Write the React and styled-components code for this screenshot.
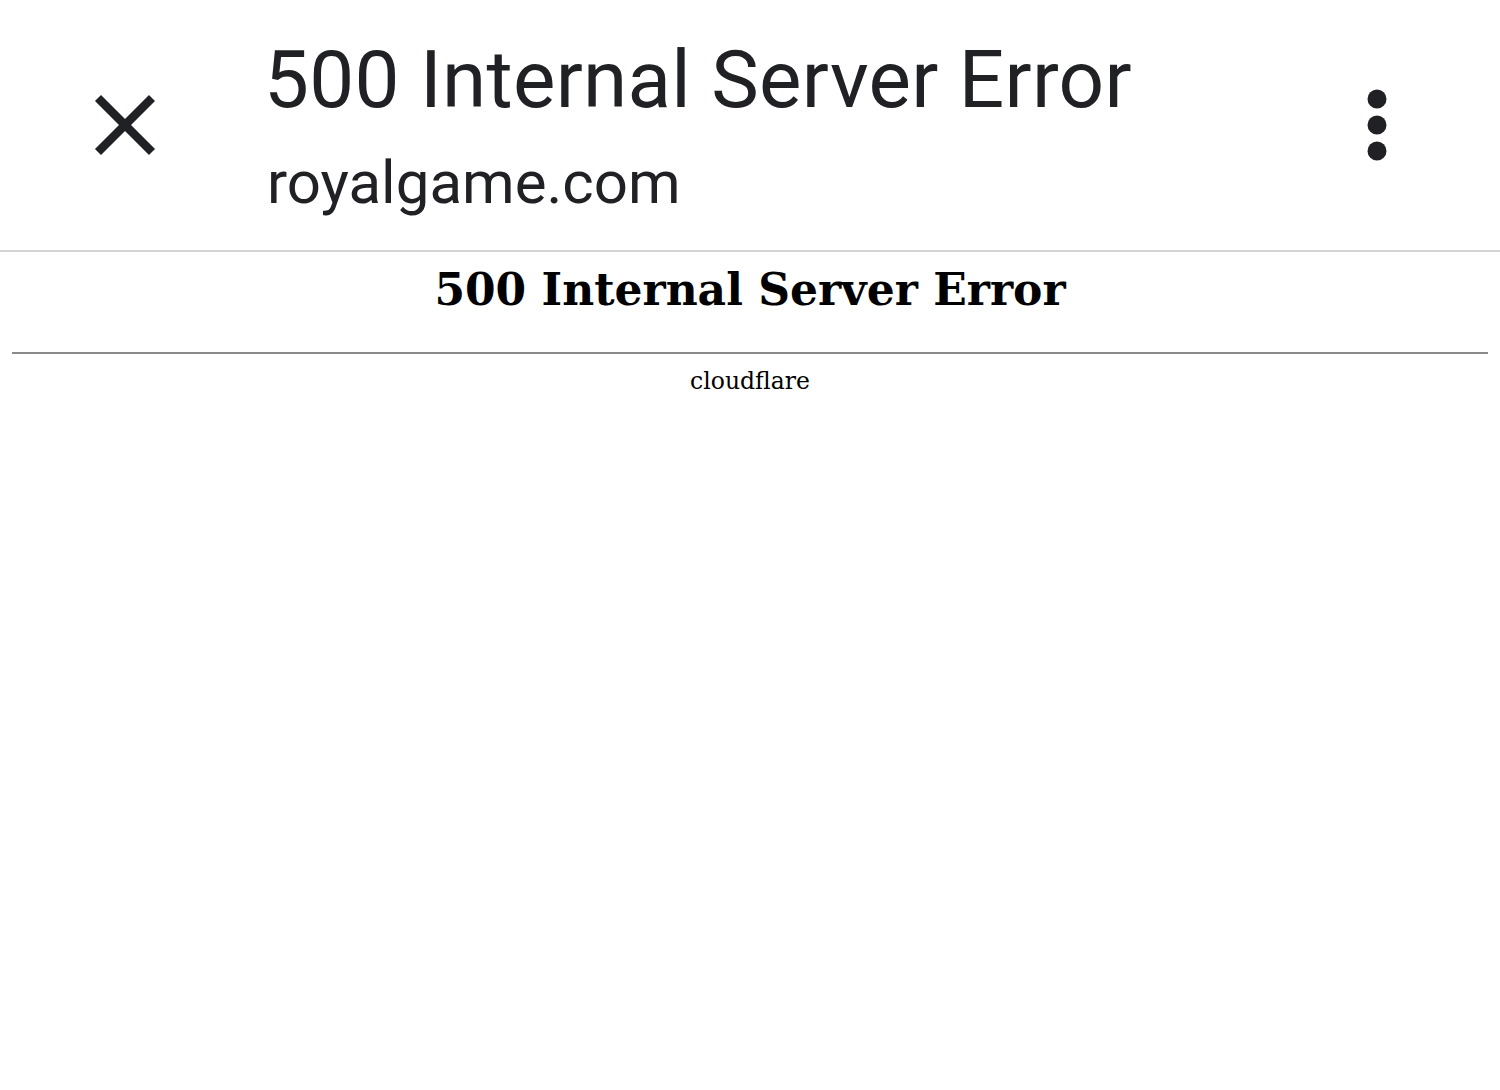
import React from 'react';
import styled, { createGlobalStyle } from 'styled-components';

const GlobalStyle = createGlobalStyle`
  html, body {
    margin: 0;
    padding: 0;
    background: #ffffff;
  }
`;

const Screen = styled.div`
  width: 1500px;
  min-height: 1090px;
  background: #ffffff;
`;

const TopBar = styled.header`
  height: 252px;
  display: flex;
  align-items: center;
  border-bottom: 2px solid #d4d4d4;
  box-sizing: border-box;
  color: #202124;
`;

const IconButton = styled.button`
  flex: none;
  width: ${(p) => p.$width}px;
  height: 100%;
  display: flex;
  align-items: center;
  justify-content: center;
  padding: 0;
  border: 0;
  background: transparent;
  color: inherit;
`;

const TitleBlock = styled.div`
  flex: 1;
  display: flex;
  flex-direction: column;
  padding: 12px 0 0 18px;
  font-family: Roboto, "Open Sans", sans-serif;
`;

const PageTitle = styled.div`
  margin-left: -3px;
  font-size: 80px;
  line-height: 96px;
  letter-spacing: 0.3px;
  color: #202124;
  white-space: nowrap;
`;

const PageUrl = styled.div`
  margin-top: 7px;
  font-size: 60px;
  line-height: 96px;
  letter-spacing: 0;
  color: #202124;
`;

const Content = styled.main`
  padding: 0 12px;
  font-family: "DejaVu Serif", "Liberation Serif", serif;
  color: #000;
  text-align: center;
`;

const Heading = styled.h1`
  margin: 8px 0 0;
  font-size: 44px;
  line-height: 60px;
  font-weight: bold;
`;

const Rule = styled.hr`
  margin: 32px 0 0;
  border: 0;
  border-top: 2px solid #8a8a8a;
`;

const Footer = styled.div`
  margin-top: 12px;
  font-size: 23.5px;
  line-height: 30px;
`;

const CloseIcon = () => (
  <svg width="64" height="64" viewBox="0 0 64 64">
    <path d="M5 5 L59 59 M59 5 L5 59" stroke="currentColor" strokeWidth="8.5" strokeLinecap="butt" />
  </svg>
);

const MoreIcon = () => (
  <svg width="20" height="72" viewBox="0 0 20 72">
    <circle cx="10" cy="10" r="9.5" fill="currentColor" />
    <circle cx="10" cy="36" r="9.5" fill="currentColor" />
    <circle cx="10" cy="62" r="9.5" fill="currentColor" />
  </svg>
);

export default function App() {
  return (
    <Screen>
      <GlobalStyle />
      <TopBar>
        <IconButton $width={249}>
          <CloseIcon />
        </IconButton>
        <TitleBlock>
          <PageTitle>500 Internal Server Error</PageTitle>
          <PageUrl>royalgame.com</PageUrl>
        </TitleBlock>
        <IconButton $width={246}>
          <MoreIcon />
        </IconButton>
      </TopBar>
      <Content>
        <Heading>500 Internal Server Error</Heading>
        <Rule />
        <Footer>cloudflare</Footer>
      </Content>
    </Screen>
  );
}
